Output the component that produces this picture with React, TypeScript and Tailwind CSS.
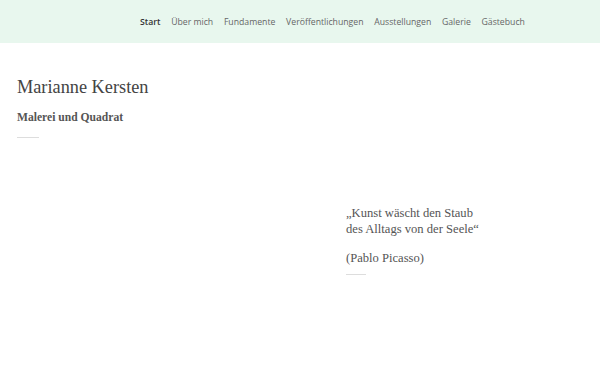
const navItems = ['Start', 'Über mich', 'Fundamente', 'Veröffentlichungen', 'Ausstellungen', 'Galerie', 'Gästebuch'];

export default function App() {
  return (
    <div className="min-h-[375px] bg-white">
      <header className="flex h-[43px] items-center bg-[#e8f7ee] pl-[140px] pt-[2px]">
        <nav className="flex gap-[10.7px] font-['Open_Sans',sans-serif] text-[8.7px] leading-none">
          {navItems.map((item, i) => (
            <a
              key={item}
              className={i === 0 ? 'font-semibold text-[#333]' : 'text-[#666]'}
            >
              {item}
            </a>
          ))}
        </nav>
      </header>

      <main className="flex pl-[17px] font-['Liberation_Serif',serif] text-[#444]">
        <section className="w-[329px] shrink-0 pt-[32px]">
          <h1 className="text-[18.3px] leading-[24px]">Marianne Kersten</h1>
          <h2 className="mt-[11px] text-[11.6px] font-bold leading-[16px] text-[#555]">Malerei und Quadrat</h2>
          <div className="mt-[11px] h-px w-[22px] bg-[#ddd]" />
        </section>

        <section className="pt-[162px] text-[12.6px] leading-[16px] text-[#555]">
          <p>„Kunst wäscht den Staub<br />des Alltags von der Seele“</p>
          <p className="mt-[13px]">(Pablo Picasso)</p>
          <div className="mt-[8px] h-px w-[20px] bg-[#ddd]" />
        </section>
      </main>
    </div>
  );
}
